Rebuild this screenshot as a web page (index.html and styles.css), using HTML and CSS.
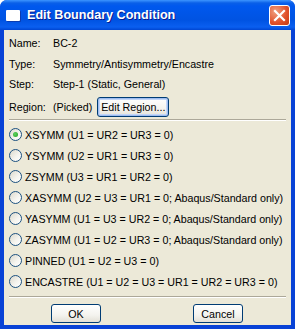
FILE: index.html
```html
<!DOCTYPE html>
<html lang="en">
<head>
    <meta charset="UTF-8">
    <title>Edit Boundary Condition</title>
    <link rel="stylesheet" href="styles.css">
</head>
<body>
    <div class="window">
        <div class="titlebar">
            <span class="app-icon"></span>
            <span class="title">Edit Boundary Condition</span>
            <span class="close-btn">
                <svg width="13" height="13" viewBox="0 0 13 13">
                    <path d="M2 2 L11 11 M11 2 L2 11" stroke="#fff" stroke-width="2.2" stroke-linecap="square"/>
                </svg>
            </span>
        </div>
        <div class="body">
            <div class="info">
                <span class="label">Name:</span><span>BC-2</span>
                <span class="label">Type:</span><span>Symmetry/Antisymmetry/Encastre</span>
                <span class="label">Step:</span><span>Step-1 (Static, General)</span>
                <span class="label">Region:</span>
                <span class="region">(Picked) <button class="btn btn-focus">Edit Region...</button></span>
            </div>
            <hr class="sep">
            <div class="options">
                <label class="opt"><span class="radio checked"></span>XSYMM (U1 = UR2 = UR3 = 0)</label>
                <label class="opt"><span class="radio"></span>YSYMM (U2 = UR1 = UR3 = 0)</label>
                <label class="opt"><span class="radio"></span>ZSYMM (U3 = UR1 = UR2 = 0)</label>
                <label class="opt"><span class="radio"></span>XASYMM (U2 = U3 = UR1 = 0; Abaqus/Standard only)</label>
                <label class="opt"><span class="radio"></span>YASYMM (U1 = U3 = UR2 = 0; Abaqus/Standard only)</label>
                <label class="opt"><span class="radio"></span>ZASYMM (U1 = U2 = UR3 = 0; Abaqus/Standard only)</label>
                <label class="opt"><span class="radio"></span>PINNED (U1 = U2 = U3 = 0)</label>
                <label class="opt"><span class="radio"></span>ENCASTRE (U1 = U2 = U3 = UR1 = UR2 = UR3 = 0)</label>
            </div>
            <hr class="sep">
            <div class="actions">
                <button class="btn btn-wide">OK</button>
                <button class="btn btn-wide">Cancel</button>
            </div>
        </div>
    </div>
</body>
</html>
```

FILE: styles.css
```css
body {
    margin: 0;
    font-family: "Liberation Sans", Arial, sans-serif;
    font-size: 10.7px;
    color: #000;
}
.window {
    width: 295px;
    height: 329px;
    box-sizing: border-box;
    background: #0842d6;
    padding: 0 4px 4px 4px;
    display: flex;
    flex-direction: column;
    border-radius: 7px 7px 0 0;
    overflow: hidden;
}
.titlebar {
    height: 30px;
    margin: 0 -4px;
    padding: 0 5px 0 6px;
    display: flex;
    align-items: center;
    background: linear-gradient(#3d95ff 0, #0a5fe8 3px, #0058ee 6px, #0053e2 20px, #0a5ff0 27px, #0046d2 30px);
}
.app-icon {
    width: 14px;
    height: 11px;
    box-sizing: border-box;
    background: #fff;
    border-radius: 1px;
    box-shadow: 1px 1px 0 #0a3cb0;
    margin-right: 7px;
}
.title {
    flex: 1;
    color: #fff;
    font-weight: bold;
    font-size: 12.6px;
    text-shadow: 1px 1px 0 #0a1a8c;
}
.close-btn {
    width: 21px;
    height: 21px;
    box-sizing: border-box;
    border: 1px solid #fff;
    border-radius: 3px;
    background: radial-gradient(circle at 30% 30%, #f0a080, #e0502a 60%, #c43c12);
    display: flex;
    align-items: center;
    justify-content: center;
}
.body {
    flex: 1;
    background: #ece9d8;
    padding: 3px 5px 0 5px;
    white-space: nowrap;
}
.info {
    display: grid;
    grid-template-columns: 44px 1fr;
    grid-auto-rows: 20.5px;
    align-items: center;
}
.info .label:nth-last-child(2),
.region {
    height: 24px;
    display: flex;
    align-items: center;
    margin-top: 4px;
}
.region {
    gap: 5px;
}
.btn {
    font-family: "Liberation Sans", Arial, sans-serif;
    font-size: 10.7px;
    height: 20px;
    padding: 0 3px;
    border: 1px solid #003c74;
    border-radius: 3px;
    background: linear-gradient(#ffffff, #f4f3ee 60%, #e3e0d6);
    color: #000;
}
.btn-focus {
    box-shadow: inset 0 0 0 1px #9dbcf0, inset 0 0 0 2px #c3d6f7;
}
.sep {
    border: none;
    border-top: 1px solid #aca899;
    border-bottom: 1px solid #fff;
    margin: 4px 0 0 0;
}
.options {
    display: flex;
    flex-direction: column;
    padding-top: 3px;
}
.opt {
    height: 21px;
    display: flex;
    align-items: center;
}
.radio {
    flex: none;
    width: 13px;
    height: 13px;
    box-sizing: border-box;
    border: 1px solid #1c5180;
    border-radius: 50%;
    background: linear-gradient(135deg, #dcd9cc, #f6f5f0 60%, #fff);
    margin-right: 3px;
    display: flex;
    align-items: center;
    justify-content: center;
}
.radio.checked::after {
    content: "";
    width: 5px;
    height: 5px;
    border-radius: 50%;
    background: radial-gradient(circle at 40% 40%, #5ed05e, #21a121);
}
.actions {
    display: flex;
    padding: 6px 0 0 42px;
    gap: 92px;
}
.btn-wide {
    width: 50px;
    height: 19px;
}
```
